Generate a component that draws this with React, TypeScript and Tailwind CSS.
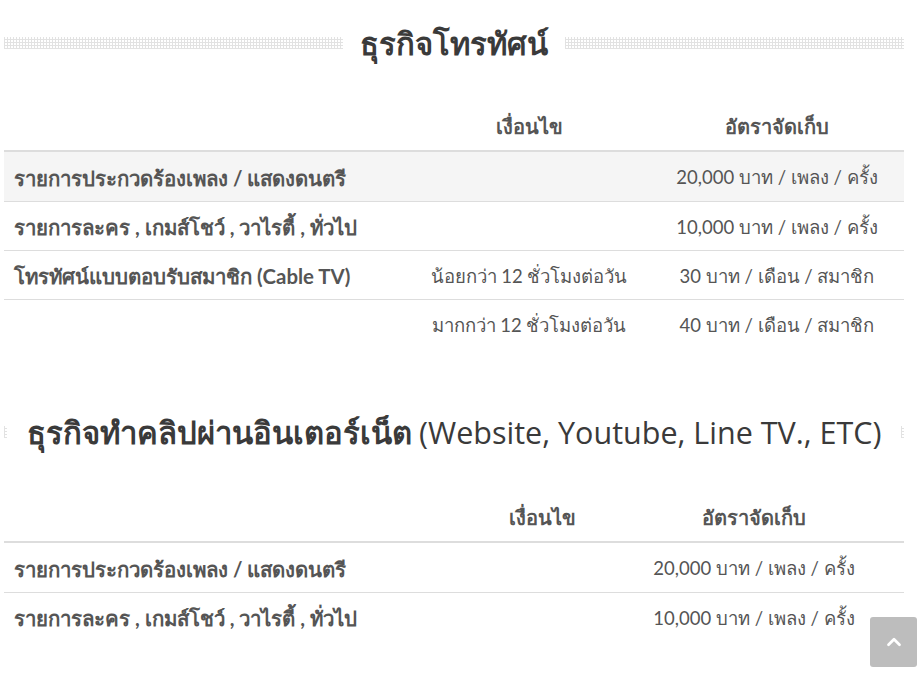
import { ChevronUp } from "lucide-react";

const dotted =
  "h-[12px] bg-[repeating-linear-gradient(0deg,#e2e2e2_0_1px,transparent_1px_3px),repeating-linear-gradient(90deg,#e2e2e2_0_1px,transparent_1px_3px)]";

type Row = { name: string; cond: string; rate: string; shade?: boolean };

const tv: Row[] = [
  { name: "รายการประกวดร้องเพลง / แสดงดนตรี", cond: "", rate: "20,000 บาท / เพลง / ครั้ง", shade: true },
  { name: "รายการละคร , เกมส์โชว์ , วาไรตี้ , ทั่วไป", cond: "", rate: "10,000 บาท / เพลง / ครั้ง" },
  { name: "โทรทัศน์แบบตอบรับสมาชิก (Cable TV)", cond: "น้อยกว่า 12 ชั่วโมงต่อวัน", rate: "30 บาท / เดือน / สมาชิก" },
  { name: "", cond: "มากกว่า 12 ชั่วโมงต่อวัน", rate: "40 บาท / เดือน / สมาชิก" },
];

const web: Row[] = [
  { name: "รายการประกวดร้องเพลง / แสดงดนตรี", cond: "", rate: "20,000 บาท / เพลง / ครั้ง" },
  { name: "รายการละคร , เกมส์โชว์ , วาไรตี้ , ทั่วไป", cond: "", rate: "10,000 บาท / เพลง / ครั้ง" },
];

function RateTable({ rows, cols }: { rows: Row[]; cols: string }) {
  return (
    <div className="w-[900px]">
      <div className={`grid ${cols} border-b-2 border-[#dddddd] pb-[9px] text-[20px] font-bold`}>
        <div />
        <div className="text-center">เงื่อนไข</div>
        <div className="text-center">อัตราจัดเก็บ</div>
      </div>
      {rows.map((r, i) => (
        <div
          key={i}
          className={`grid ${cols} h-[49px] items-center pt-[3px] ${i > 0 ? "border-t border-[#dddddd]" : ""} ${r.shade ? "bg-[#f5f5f5]" : ""}`}
        >
          <div className="pl-[10px] text-[20.4px] font-bold">{r.name}</div>
          <div className="text-center">{r.cond}</div>
          <div className="text-center">{r.rate}</div>
        </div>
      ))}
    </div>
  );
}

export default function App() {
  return (
    <div className="relative h-[673px] w-[917px] overflow-hidden bg-white font-['Lato','Noto_Sans',sans-serif] text-[18.5px] text-[#555555]">
      <div className="ml-[4px] w-[900px]">
        <div className="flex items-center gap-[17px] pt-[24px]">
          <div className={`flex-1 ${dotted}`} />
          <h2 className="text-[31px] font-bold leading-[38px] text-[#3a3a3a]">ธุรกิจโทรทัศน์</h2>
          <div className={`flex-1 ${dotted}`} />
        </div>

        <div className="pt-[49px]">
          <RateTable rows={tv} cols="grid-cols-[404px_242px_254px]" />
        </div>

        <div className="flex items-center gap-[16px] pt-[65px]">
          <div className={`w-[3px] ${dotted}`} />
          <h2 className="flex-1 text-center text-[31px] font-bold leading-[38px] text-[#3a3a3a]">
            ธุรกิจทำคลิปผ่านอินเตอร์เน็ต{" "}
            <span className="font-['Open_Sans',sans-serif] text-[30.5px] font-normal">(Website, Youtube, Line TV., ETC)</span>
          </h2>
          <div className={`w-[3px] ${dotted}`} />
        </div>

        <div className="pt-[51px]">
          <RateTable rows={web} cols="grid-cols-[476px_124px_300px]" />
        </div>
      </div>

      <button className="absolute left-[870px] top-[617px] flex h-[50px] w-[47px] items-center justify-center rounded-[3px] bg-[#bdbdbd] text-white">
        <ChevronUp size={22} strokeWidth={3} />
      </button>
    </div>
  );
}
